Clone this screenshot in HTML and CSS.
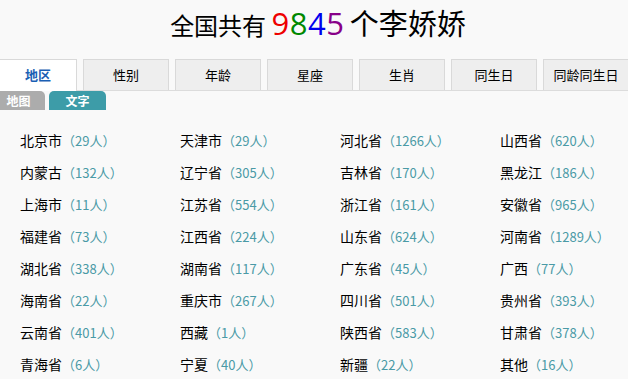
FILE: index.html
```html
<!DOCTYPE html>
<html lang="zh-CN">
<head>
  <meta charset="UTF-8" />
  <meta name="viewport" content="width=device-width, initial-scale=1.0"/>
  <title>李娇娇</title>
  <link rel="stylesheet" href="styles.css">
</head>
<body>

  <!-- 标题 -->
  <h1 class="title">全国共有 <span class="num"><span class="c1">9</span><span class="c2">8</span><span class="c3">4</span><span class="c4">5</span></span> <span class="name">个李娇娇</span></h1>

  <!-- 主选项卡 -->
  <ul class="tabs">
    <li class="active">地区</li>
    <li>性别</li>
    <li>年龄</li>
    <li>星座</li>
    <li>生肖</li>
    <li>同生日</li>
    <li>同龄同生日</li>
  </ul>

  <!-- 子选项卡 -->
  <div class="subtabs">
    <span class="map">地图</span>
    <span class="text on">文字</span>
  </div>

  <!-- 地区列表 -->
  <div class="areas" id="areas"></div>

  <script>
    var data = [
      ["北京市", 29], ["天津市", 29], ["河北省", 1266], ["山西省", 620],
      ["内蒙古", 132], ["辽宁省", 305], ["吉林省", 170], ["黑龙江", 186],
      ["上海市", 11], ["江苏省", 554], ["浙江省", 161], ["安徽省", 965],
      ["福建省", 73], ["江西省", 224], ["山东省", 624], ["河南省", 1289],
      ["湖北省", 338], ["湖南省", 117], ["广东省", 45], ["广西", 77],
      ["海南省", 22], ["重庆市", 267], ["四川省", 501], ["贵州省", 393],
      ["云南省", 401], ["西藏", 1], ["陕西省", 583], ["甘肃省", 378],
      ["青海省", 6], ["宁夏", 40], ["新疆", 22], ["其他", 16]
    ];

    var html = "";
    data.forEach(function (d) {
      html += '<div class="area">' + d[0] + '<span class="count">（' + d[1] + '人）</span></div>';
    });
    document.getElementById("areas").innerHTML = html;
  </script>

</body>
</html>
```

FILE: styles.css
```css
* {
  box-sizing: border-box;
}

body {
  margin: 0;
  font-family: "Noto Sans CJK SC", "Noto Sans", sans-serif;
  background: #f9f9f9;
  color: #000;
  overflow: hidden;
}

.title {
  margin: 0;
  height: 59px;
  padding: 2px 0 0 8px;
  text-align: center;
  font-size: 24px;
  font-weight: normal;
  line-height: 40px;
}

.title .num {
  font-family: "Open Sans", sans-serif;
  font-size: 31px;
  letter-spacing: 0.5px;
}

.title .name {
  font-size: 29px;
}

.c1 { color: #ee0000; }
.c2 { color: #008800; }
.c3 { color: #0000ee; }
.c4 { color: #880088; }

.tabs {
  display: flex;
  margin: 0;
  padding: 0;
  list-style: none;
  height: 32px;
  border-bottom: 1px solid #dcdcdc;
}

.tabs li {
  width: 86px;
  margin-left: 6px;
  height: 31px;
  background: #eeeeee;
  border: 1px solid #d9d9d9;
  border-bottom: none;
  text-align: center;
  font-size: 13px;
  line-height: 29px;
  flex-shrink: 0;
}

.tabs li:last-child {
  width: 85px;
  border-right: none;
}

.tabs li.active {
  width: 77px;
  margin-left: 0;
  height: 32px;
  background: #fff;
  border-left: none;
  color: #1a5fb4;
  font-weight: bold;
}

.subtabs {
  display: flex;
  gap: 4px;
  height: 19px;
}

.subtabs span {
  color: #fff;
  font-size: 12px;
  font-weight: bold;
  line-height: 19px;
  text-align: center;
  border-radius: 5px 5px 0 0;
}

.subtabs .map {
  width: 45px;
  background: #acacac;
  border-top-left-radius: 0;
  padding-right: 8px;
}

.subtabs .text {
  width: 57px;
  background: #3d9ca8;
}

.areas {
  display: grid;
  grid-template-columns: 160px 160px 160px 1fr;
  grid-auto-rows: 32px;
  padding: 14px 0 0 20px;
}

.area {
  font-size: 14px;
  line-height: 32px;
  white-space: nowrap;
}

.count {
  color: #4a9aa6;
  font-size: 13px;
}
```
